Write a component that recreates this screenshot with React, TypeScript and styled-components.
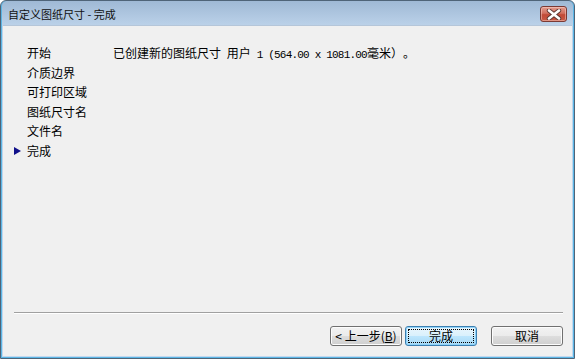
import styled, { createGlobalStyle } from "styled-components";

const GlobalStyle = createGlobalStyle`
  html, body {
    margin: 0;
    padding: 0;
    background: #ffffff;
  }
  body {
    font-family: "Noto Sans CJK SC", "Liberation Sans", sans-serif;
    font-size: 12px;
    color: #000000;
  }
`;

const steps = ["开始", "介质边界", "可打印区域", "图纸尺寸名", "文件名", "完成"];

export default function App() {
  return (
    <>
      <GlobalStyle />
      <Frame>
        <TitleBar>
          <Title>自定义图纸尺寸 - 完成</Title>
          <CloseButton aria-label="关闭">
            <svg width="16" height="11" viewBox="0 0 16 11">
              <path
                d="M3 1.5 L13 9.5 M13 1.5 L3 9.5"
                stroke="#5a3530"
                strokeWidth="4.4"
                strokeLinecap="round"
              />
              <path
                d="M3 1.5 L13 9.5 M13 1.5 L3 9.5"
                stroke="#ffffff"
                strokeWidth="2.6"
                strokeLinecap="round"
              />
            </svg>
          </CloseButton>
        </TitleBar>
        <Body>
          <Main>
            <StepList>
              {steps.map((s, i) => (
                <Step key={s} $current={i === steps.length - 1}>
                  {s}
                </Step>
              ))}
            </StepList>
            <Message>
              已创建新的图纸尺寸<Mono> </Mono>用户<Mono> 1 (564.00 x 1081.00</Mono>毫米）。
            </Message>
          </Main>
          <Footer>
            <Separator />
            <ButtonRow>
              <Button>
                &lt; 上一步(<u>B</u>)
              </Button>
              <Button $default>
                <Focus>完成</Focus>
              </Button>
              <Button $spaced>取消</Button>
            </ButtonRow>
          </Footer>
        </Body>
      </Frame>
    </>
  );
}

const Frame = styled.div`
  width: 575px;
  height: 359px;
  box-sizing: border-box;
  display: flex;
  flex-direction: column;
  border: 1px solid #4f6478;
  border-radius: 6px 6px 0 0;
  background: linear-gradient(#9fb9d5, #bdd3ea 26px, #c3d8ee);
  padding: 0 2px 2px 2px;
  box-shadow: inset 0 -1px 0 #5ab6e6, inset 1px 0 0 #5ab6e6, inset -1px 0 0 #5ab6e6;
`;

const TitleBar = styled.div`
  height: 24px;
  display: flex;
  align-items: center;
  justify-content: space-between;
  padding: 0 5px 0 5px;
`;

const Title = styled.div`
  font-size: 11px;
  color: #111111;
  margin-top: 1px;
`;

const CloseButton = styled.div`
  width: 27px;
  height: 16px;
  margin-top: 2px;
  box-sizing: border-box;
  border: 1px solid #7b3a34;
  border-radius: 3px;
  background: linear-gradient(#e39c8f, #d1705f 45%, #c14a37 55%, #c85a45);
  box-shadow: inset 0 0 0 1px rgba(255, 220, 210, 0.45);
  display: flex;
  align-items: center;
  justify-content: center;
`;

const Body = styled.div`
  flex: 1;
  display: flex;
  flex-direction: column;
  background: #f0f0f0;
  border-top: 1px solid #b5c6d9;
`;

const Main = styled.div`
  flex: 1;
  display: flex;
  padding: 17px 0 0 11px;
`;

const StepList = styled.div`
  width: 99px;
  display: flex;
  flex-direction: column;
`;

const Step = styled.div<{ $current?: boolean }>`
  position: relative;
  height: 19.5px;
  line-height: 19.5px;
  padding-left: 13px;
  white-space: nowrap;

  &::before {
    content: "";
    display: ${(p) => (p.$current ? "block" : "none")};
    position: absolute;
    left: 0;
    top: 6px;
    border-style: solid;
    border-width: 4px 0 4px 7px;
    border-color: transparent transparent transparent #10108a;
  }
`;

const Message = styled.div`
  line-height: 19.5px;
  white-space: pre;
  text-spacing-trim: space-all;
`;

const Mono = styled.span`
  font-family: "Liberation Mono", "DejaVu Sans Mono", monospace;
  font-size: 11px;
  letter-spacing: -0.8px;
`;

const Footer = styled.div`
  display: flex;
  flex-direction: column;
  padding: 0 9px 10px 11px;
`;

const Separator = styled.div`
  height: 1px;
  background: #a0a0a0;
  border-bottom: 1px solid #ffffff;
`;

const ButtonRow = styled.div`
  display: flex;
  justify-content: flex-end;
  gap: 3px;
  margin-top: 12px;
`;

const Button = styled.div<{ $default?: boolean; $spaced?: boolean }>`
  width: 72px;
  height: 20px;
  box-sizing: border-box;
  margin-left: ${(p) => (p.$spaced ? "11px" : "0")};
  border: 1px solid ${(p) => (p.$default ? "#3c7fb1" : "#707070")};
  border-radius: 3px;
  background: ${(p) =>
    p.$default
      ? "linear-gradient(#eaf6fd, #d9f0fc 50%, #bee6fd 50%, #a7d9f5)"
      : "linear-gradient(#f2f2f2, #ebebeb 50%, #dddddd 50%, #cfcfcf)"};
  box-shadow: inset 0 0 0 1px ${(p) => (p.$default ? "#8fd3f9" : "#fcfcfc")};
  display: flex;
  align-items: center;
  justify-content: center;
  padding: 2px;
  line-height: 14px;
  white-space: nowrap;
`;

const Focus = styled.div`
  flex: 1;
  align-self: stretch;
  border: 1px dotted #000000;
  display: flex;
  align-items: center;
  justify-content: center;
`;
